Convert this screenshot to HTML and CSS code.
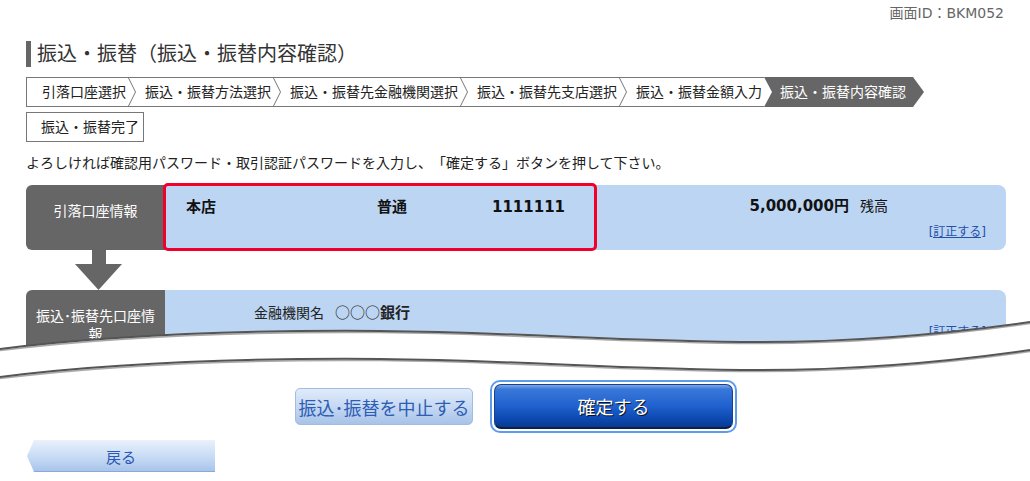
FILE: index.html
```html
<!DOCTYPE html>
<html lang="ja">
<head>
    <meta charset="UTF-8">
    <meta name="viewport" content="width=device-width, initial-scale=1.0">
    <title>振込・振替（振込・振替内容確認）</title>
    <link rel="stylesheet" href="styles.css">
</head>
<body>
    <div class="page">
        <p class="screen-id">画面ID：BKM052</p>
        <h1 class="title">振込・振替（振込・振替内容確認）</h1>

        <div class="steps">
            <ol class="step-list">
                <li>引落口座選択<svg class="step-sep" viewBox="0 0 8 28"><polyline points="0.5,0 7.5,14 0.5,28"/></svg></li>
                <li>振込・振替方法選択<svg class="step-sep" viewBox="0 0 8 28"><polyline points="0.5,0 7.5,14 0.5,28"/></svg></li>
                <li>振込・振替先金融機関選択<svg class="step-sep" viewBox="0 0 8 28"><polyline points="0.5,0 7.5,14 0.5,28"/></svg></li>
                <li>振込・振替先支店選択<svg class="step-sep" viewBox="0 0 8 28"><polyline points="0.5,0 7.5,14 0.5,28"/></svg></li>
                <li class="step-prev">振込・振替金額入力</li>
            </ol>
            <div class="step-now">振込・振替内容確認</div>
        </div>
        <div class="step-done">振込・振替完了</div>

        <p class="lead">よろしければ確認用パスワード・取引認証パスワードを入力し、「確定する」ボタンを押して下さい。</p>

        <div class="panel">
            <div class="panel-label">引落口座情報</div>
            <div class="panel-body">
                <div class="acct">
                    <span class="acct-branch">本店</span>
                    <span class="acct-type">普通</span>
                    <span class="acct-num">1111111</span>
                </div>
                <div class="bal">
                    <p class="bal-line"><b>5,000,000円</b><span class="bal-unit">残高</span></p>
                    <p class="fix"><a href="#">[訂正する]</a></p>
                </div>
            </div>
        </div>

        <div class="flow-arrow">
            <svg viewBox="0 0 47 40" width="47" height="40"><rect x="17" y="0" width="14" height="15"/><polygon points="0,14 47,14 23.5,40"/></svg>
        </div>

        <div class="cut">
            <div class="panel panel-to">
                <div class="panel-label">振込･振替先口座情報</div>
                <div class="panel-body panel-body-to">
                    <p class="bank-line">金融機関名<span class="circles">○○○</span><b>銀行</b></p>
                    <p class="fix fix-to"><a href="#">[訂正する]</a></p>
                </div>
            </div>
            <svg class="break" viewBox="0 318 1030 62" preserveAspectRatio="none">
                <path class="break-fill" d="M0,349 C120,334 250,330 380,331 C520,332 620,342 760,342 C870,342 960,332 1030,322 L1030,380 L0,380 Z"/>
                <path class="break-shade" transform="translate(0,1.6)" d="M0,349 C120,334 250,330 380,331 C520,332 620,342 760,342 C870,342 960,332 1030,322"/>
                <path class="break-line" d="M0,349 C120,334 250,330 380,331 C520,332 620,342 760,342 C870,342 960,332 1030,322"/>
                <path class="break-shade" transform="translate(0,29.6)" d="M0,349 C120,334 250,330 380,331 C520,332 620,342 760,342 C870,342 960,332 1030,322"/>
                <path class="break-line" transform="translate(0,28)" d="M0,349 C120,334 250,330 380,331 C520,332 620,342 760,342 C870,342 960,332 1030,322"/>
            </svg>
        </div>

        <div class="actions">
            <button class="btn-cancel" type="button">振込･振替を中止する</button>
            <button class="btn-confirm" type="button"><span>確定する</span></button>
        </div>

        <button class="btn-back" type="button">戻る</button>
    </div>
</body>
</html>
```

FILE: styles.css
```css
body {
    margin: 0;
    font-family: "DejaVu Sans", "Noto Sans CJK JP", sans-serif;
    font-size: 14px;
    color: #222;
    background-color: #fff;
    text-spacing-trim: space-all;
}

p {
    margin: 0;
}

.page {
    padding: 0 24px 0 26px;
}

.screen-id {
    padding: 4px 2px 0 0;
    line-height: 18px;
    text-align: right;
    color: #666;
}

.title {
    margin: 19px 0 0;
    padding-left: 6px;
    border-left: 5px solid #666;
    font-size: 20px;
    font-weight: normal;
    line-height: 26px;
    color: #333;
}

/* step bar */
.steps {
    display: flex;
    margin-top: 10px;
    height: 30px;
}

.step-list {
    display: flex;
    margin: 0;
    padding: 0 0 0 15px;
    list-style: none;
    border: 1px solid #777;
    border-right: none;
    line-height: 28px;
}

.step-list li {
    display: flex;
    align-items: center;
    height: 28px;
}

.step-sep {
    width: 8px;
    height: 28px;
    margin: 0 9px 0 2px;
    fill: none;
    stroke: #777;
    stroke-width: 1;
}

.step-prev {
    padding-right: 2px;
}

.step-now {
    height: 30px;
    padding: 0 18px 0 16px;
    background-color: #666;
    color: #fff;
    line-height: 30px;
    clip-path: polygon(0 0, calc(100% - 11px) 0, 100% 50%, calc(100% - 11px) 100%, 0 100%, 8px 50%);
}

.step-done {
    width: fit-content;
    margin-top: 5px;
    padding: 0 4px 0 14px;
    border: 1px solid #777;
    line-height: 28px;
}

.lead {
    margin-top: 11px;
    line-height: 20px;
}

/* account panels */
.panel {
    display: flex;
    height: 65px;
    margin-top: 12px;
}

.panel-label {
    box-sizing: border-box;
    width: 139px;
    padding: 17px 9px 0;
    background-color: #666;
    color: #fff;
    border-radius: 6px 0 0 6px;
    text-align: center;
    line-height: 18px;
}

.panel-body {
    flex: 1;
    display: flex;
    background-color: #bcd5f3;
    border-radius: 0 8px 8px 0;
}

.acct {
    position: relative;
    box-sizing: border-box;
    display: flex;
    align-self: flex-start;
    width: 434px;
    height: 68px;
    margin: -2px 0 0 -2px;
    padding: 11px 0 0 20px;
    border: 3px solid #f0002a;
    border-radius: 5px;
    font-size: 15px;
    font-weight: bold;
    line-height: 20px;
    color: #111;
}

.acct-branch {
    width: 191px;
}

.acct-type {
    width: 115px;
}

.bal {
    flex: 1;
    padding: 11px 20px 0 0;
    text-align: right;
}

.bal-line {
    padding-right: 98px;
    line-height: 20px;
    color: #111;
}

.bal-line b {
    font-size: 15px;
}

.bal-unit {
    margin-left: 11px;
}

.fix {
    margin-top: 8px;
    font-size: 12px;
    line-height: 16px;
}

.fix a {
    color: #2450a8;
}

.flow-arrow {
    height: 40px;
}

.flow-arrow svg {
    display: block;
    margin-left: 49px;
    fill: #666;
}

/* torn edge over the second panel */
.cut {
    position: relative;
    height: 90px;
    margin: 0 -24px 0 -26px;
    padding: 0 24px 0 26px;
    overflow: hidden;
}

.panel-to {
    height: 85px;
    margin-top: 0;
}

.panel-body-to {
    display: block;
    padding: 12px 20px 0 89px;
}

.bank-line {
    line-height: 20px;
}

.circles {
    margin-left: 11px;
    font-family: "Noto Sans CJK JP", sans-serif;
    font-size: 15px;
}

.bank-line b {
    font-size: 15px;
}

.fix-to {
    margin-top: 1px;
    text-align: right;
}

.break {
    position: absolute;
    left: 0;
    top: 28px;
    width: 1030px;
    height: 62px;
}

.break-fill {
    fill: #fff;
}

.break-line {
    fill: none;
    stroke: #555;
    stroke-width: 2;
}

.break-shade {
    fill: none;
    stroke: #aaa;
    stroke-width: 1.5;
}

/* buttons */
.actions {
    display: flex;
    justify-content: center;
    align-items: center;
    gap: 17px;
    height: 53px;
}

.btn-cancel {
    box-sizing: border-box;
    width: 178px;
    height: 37px;
    padding: 0;
    border: 1px solid #a2bde2;
    border-radius: 5px;
    background: linear-gradient(#e0ebfa, #c6d9f3 50%, #a8c3e8);
    color: #2d5db4;
    font-family: inherit;
    font-size: 18px;
    white-space: nowrap;
    cursor: pointer;
}

.btn-confirm {
    box-sizing: border-box;
    width: 247px;
    height: 53px;
    padding: 2px;
    border: 2px solid #5d9cec;
    border-radius: 10px;
    background: #fff;
    font-family: inherit;
    cursor: pointer;
}

.btn-confirm span {
    box-sizing: border-box;
    display: flex;
    justify-content: center;
    align-items: center;
    height: 100%;
    border: 1px solid #1c3f88;
    border-bottom: 2px solid #0c1f4c;
    border-radius: 7px;
    background: linear-gradient(#7aa8ea 0, #3a78d9 10%, #1f61cf 50%, #0b47ae 82%, #0a3a90 100%);
    color: #fff;
    font-size: 18px;
    text-shadow: 1px 1px 0 #111;
}

.btn-back {
    display: block;
    box-sizing: border-box;
    width: 188px;
    height: 32px;
    margin: 7px 0 0 1px;
    padding: 0;
    border: none;
    background: linear-gradient(#e9f1fc, #c6daf4 55%, #a6c3ea);
    box-shadow: inset 0 -1px #8aa9d6;
    clip-path: polygon(7px 0, 100% 0, 100% 100%, 7px 100%, 0 50%);
    color: #2c58b6;
    font-family: inherit;
    font-size: 15px;
    cursor: pointer;
}
```
